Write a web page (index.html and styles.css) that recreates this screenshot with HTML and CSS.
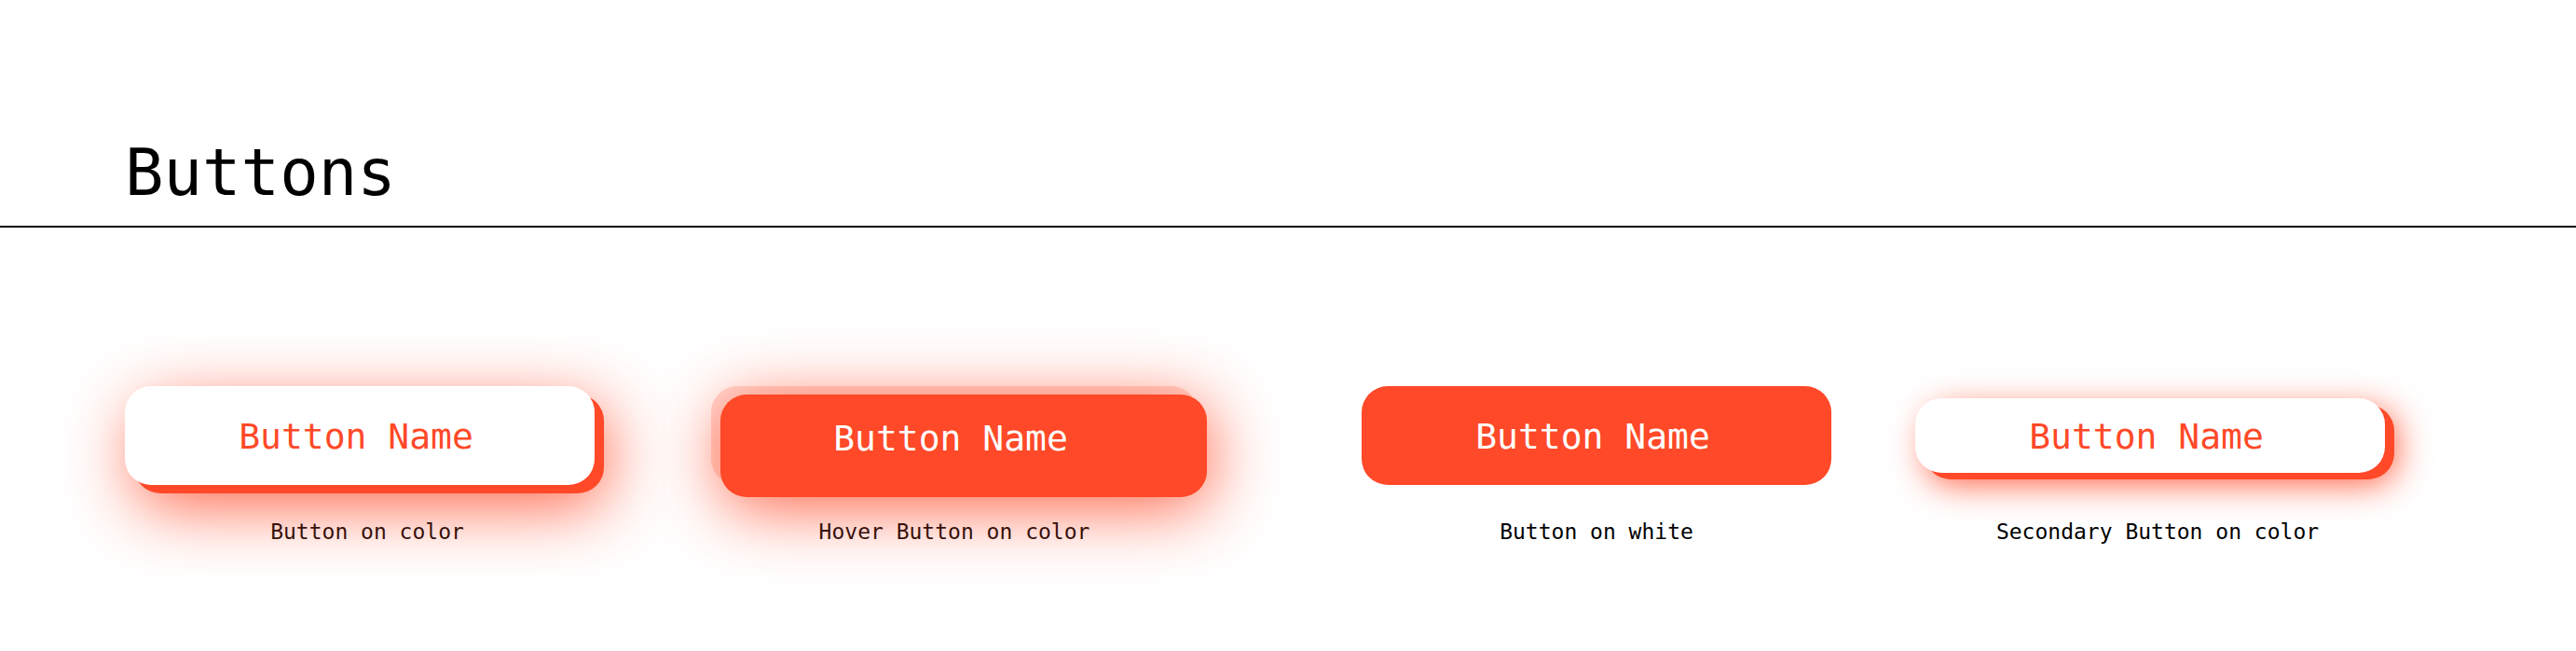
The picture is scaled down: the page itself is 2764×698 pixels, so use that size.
FILE: index.html
```html
<!DOCTYPE html>
<html lang="en">
<head>
<meta charset="utf-8">
<title>Buttons</title>
<link rel="stylesheet" href="styles.css">
</head>
<body>
<header class="header">
  <h1 class="title">Buttons</h1>
</header>
<main class="samples">
  <figure class="sample sample-raised">
    <div class="stage"><button class="btn btn-raised" type="button">Button Name</button></div>
    <figcaption class="caption caption-tinted">Button on color</figcaption>
  </figure>
  <figure class="sample sample-hover">
    <div class="stage"><button class="btn btn-hover" type="button">Button Name</button></div>
    <figcaption class="caption caption-tinted">Hover Button on color</figcaption>
  </figure>
  <figure class="sample sample-flat">
    <div class="stage"><button class="btn btn-flat" type="button">Button Name</button></div>
    <figcaption class="caption">Button on white</figcaption>
  </figure>
  <figure class="sample sample-secondary">
    <div class="stage"><button class="btn btn-secondary" type="button">Button Name</button></div>
    <figcaption class="caption">Secondary Button on color</figcaption>
  </figure>
</main>
</body>
</html>
```
FILE: styles.css
```css
:root {
  --accent: #ff4928;
  --glow: rgba(255, 73, 40, 0.87);
}

* {
  box-sizing: border-box;
}

body {
  margin: 0;
  min-height: 100vh;
  background: #fff;
  color: #000;
  font-family: "DejaVu Sans Mono", monospace;
}

.header {
  padding: 145px 134px 17px;
  border-bottom: 2px solid #000;
}

.title {
  margin: 0;
  font-size: 69px;
  font-weight: 400;
  line-height: 80px;
}

.samples {
  display: grid;
  grid-template-columns: 629fr 698fr 594fr 520fr;
  padding: 170px 189px 80px 134px;
}

.sample {
  margin: 0;
}

.sample-raised {
  margin-right: 109px;
}

.sample-hover {
  margin-right: 176px;
}

.sample-flat {
  margin-right: 90px;
}

.stage {
  display: flex;
  align-items: center;
  height: 106px;
}

.sample-raised .stage,
.sample-secondary .stage {
  padding-right: 16px;
}

.sample-hover .stage {
  align-items: flex-start;
  border-radius: 28px;
  background: rgba(255, 73, 40, 0.2);
}

.btn {
  width: 100%;
  height: 106px;
  padding: 2px 8px 0 0;
  border: 0;
  border-radius: 28px;
  font-family: inherit;
  font-size: 38px;
  line-height: 48px;
  white-space: nowrap;
}

.btn-raised {
  background: #fff;
  color: var(--accent);
  box-shadow: 10px 9px 0 var(--accent), 12px 22px 72px var(--glow);
}

.btn-hover {
  flex-shrink: 0;
  height: 110px;
  margin: 9px 0 0 10px;
  padding: 0 28px 16px 0;
  background: var(--accent);
  color: #fff;
  box-shadow: 2px 11px 72px var(--glow);
}

.btn-flat {
  background: var(--accent);
  color: #fff;
}

.btn-secondary {
  height: 80px;
  background: #fff;
  color: var(--accent);
  box-shadow: 10px 7px 0 var(--accent), 12px 12px 36px var(--glow);
}

.caption {
  position: relative;
  margin-top: 34px;
  font-size: 23px;
  line-height: 32px;
  text-align: center;
}

.caption-tinted {
  color: #38100a;
}
```
